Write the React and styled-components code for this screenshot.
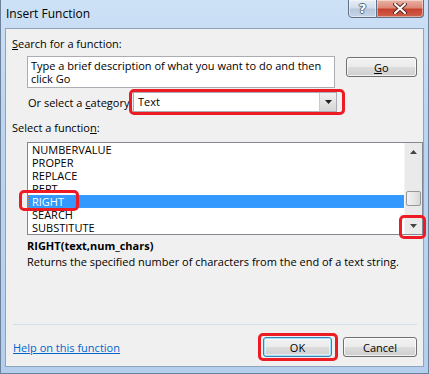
import React from "react";
import styled, { createGlobalStyle } from "styled-components";

const GlobalStyle = createGlobalStyle`
  html, body {
    margin: 0;
    padding: 0;
    background: #ffffff;
  }
  body {
    font-family: "Open Sans", "Noto Sans", sans-serif;
    font-size: 11px;
    color: #000;
  }
`;

const FONT = `"Open Sans", "Noto Sans", sans-serif`;

const Window = styled.div`
  box-sizing: border-box;
  width: 429px;
  height: 374px;
  display: flex;
  flex-direction: column;
  padding: 0 4px 6px 4px;
  border: 1px solid #6d819a;
  border-top: none;
  background: linear-gradient(180deg, #cde1f6 0%, #bcd6f1 30%, #b4cfee 100%);
`;

const TitleBar = styled.div`
  height: 28px;
  display: flex;
  align-items: flex-start;
  justify-content: space-between;
  flex: 0 0 auto;
`;

const Title = styled.div`
  font-family: ${FONT};
  font-size: 12px;
  line-height: 15px;
  padding: 6px 0 0 1px;
  color: #000;
`;

const CaptionButtons = styled.div`
  display: flex;
  margin-top: -1px;
`;

const CaptionButton = styled.div`
  box-sizing: border-box;
  width: ${(p) => p.$w}px;
  height: 19px;
  display: flex;
  align-items: center;
  justify-content: center;
  border: 1px solid #5f6f84;
  border-left: ${(p) => (p.$first ? "1px solid #5f6f84" : "none")};
  border-radius: ${(p) => (p.$first ? "0 0 0 4px" : "0 0 4px 0")};
  background: ${(p) =>
    p.$close
      ? "linear-gradient(180deg, #e9b3a6 0%, #dc8a78 45%, #c7422f 55%, #d0604c 100%)"
      : "linear-gradient(180deg, #e7eef7 0%, #d2dded 45%, #b8c8dc 55%, #c6d4e6 100%)"};
  box-shadow: inset 0 0 0 1px rgba(255, 255, 255, 0.45);
`;

const HelpGlyph = styled.span`
  font-family: "DejaVu Sans", sans-serif;
  font-weight: bold;
  font-size: 13px;
  line-height: 13px;
  color: #fff;
  text-shadow: -1px 0 #56667a, 1px 0 #56667a, 0 -1px #56667a, 0 1px #56667a;
`;

const Client = styled.div`
  position: relative;
  flex: 1 1 auto;
  display: flex;
  flex-direction: column;
  background: #f0f0f0;
  border: 1px solid #8fa3b9;
  padding: 7px 6px 9px 6px;
`;

const Label = styled.div`
  font-family: ${FONT};
  font-size: 11px;
  line-height: 15px;
  margin-top: ${(p) => p.$mt || 0}px;
  margin-left: ${(p) => p.$ml || 0}px;
  font-weight: ${(p) => (p.$bold ? 700 : 400)};
  white-space: nowrap;
`;

const Row = styled.div`
  display: flex;
  align-items: ${(p) => p.$align || "flex-start"};
  margin-top: ${(p) => p.$mt || 0}px;
  margin-left: ${(p) => p.$ml || 0}px;
`;

const SearchBox = styled.div`
  box-sizing: border-box;
  width: 311px;
  height: 32px;
  background: #fff;
  border: 1px solid #abadb3;
  padding: 2px 3px;
  font-family: ${FONT};
  font-size: 11px;
  line-height: 13px;
  white-space: nowrap;
`;

const Button = styled.div`
  box-sizing: border-box;
  width: ${(p) => p.$w}px;
  height: 20px;
  margin-left: ${(p) => p.$ml || 0}px;
  margin-top: ${(p) => p.$mt || 0}px;
  display: flex;
  align-items: center;
  justify-content: center;
  font-family: ${FONT};
  font-size: 11px;
  border: 1px solid ${(p) => (p.$default ? "#3c7fb1" : "#707070")};
  border-radius: 3px;
  background: linear-gradient(180deg, #f2f2f2 0%, #ebebeb 49%, #dddddd 50%, #cfcfcf 100%);
  box-shadow: ${(p) =>
    p.$default
      ? "inset 0 0 0 1px #9de3fb, inset 0 0 0 2px rgba(255,255,255,0.5)"
      : "inset 0 0 0 1px rgba(255,255,255,0.7)"};
`;

const U = styled.span`
  text-decoration: underline;
`;

const CategoryLabel = styled(Label)`
  flex: 0 0 105px;
`;

const Anchor = styled.div`
  position: relative;
`;

const Combo = styled.div`
  box-sizing: border-box;
  width: 204px;
  height: 20px;
  display: flex;
  background: #fff;
  border: 1px solid #abadb3;
`;

const ComboText = styled.div`
  flex: 1;
  padding-left: 4px;
  font-family: ${FONT};
  font-size: 11px;
  line-height: 18px;
`;

const ComboArrow = styled.div`
  width: 16px;
  display: flex;
  align-items: center;
  justify-content: center;
  border-left: 1px solid #c9c9c9;
  background: linear-gradient(180deg, #f2f2f2 0%, #e3e3e3 50%, #d6d6d6 100%);
`;

const Annot = styled.div`
  position: absolute;
  box-sizing: border-box;
  border: 3px solid #ed1c24;
  border-radius: 5px;
  pointer-events: none;
  z-index: 3;
`;

const ListBox = styled.div`
  position: relative;
  box-sizing: border-box;
  width: 396px;
  height: 93px;
  margin-left: 15px;
  margin-top: 7px;
  display: flex;
  background: #fff;
  border: 1px solid #828790;
`;

const Items = styled.div`
  flex: 1;
  display: flex;
  flex-direction: column;
`;

const Item = styled.div`
  height: 13px;
  line-height: 13px;
  padding-left: 4px;
  font-family: ${FONT};
  font-size: 11px;
  color: ${(p) => (p.$selected ? "#fff" : "#000")};
  background: ${(p) => (p.$selected ? "#3399ff" : "transparent")};
  outline: ${(p) => (p.$selected ? "1px dotted #c77e3a" : "none")};
  outline-offset: -1px;
`;

const ScrollBar = styled.div`
  width: 17px;
  display: flex;
  flex-direction: column;
  background: #eaeaea;
  border-left: 1px solid #f4f4f4;
`;

const ScrollArrow = styled.div`
  height: 17px;
  display: flex;
  align-items: center;
  justify-content: center;
`;

const Track = styled.div`
  flex: 1;
  display: flex;
  flex-direction: column;
  justify-content: flex-end;
  padding-bottom: 11px;
`;

const Thumb = styled.div`
  box-sizing: border-box;
  height: 15px;
  margin: 0 1px;
  border: 1px solid #979797;
  border-radius: 2px;
  background: linear-gradient(90deg, #f3f3f3 0%, #e8e8e8 50%, #d8d8d8 100%);
`;

const Separator = styled.div`
  height: 1px;
  margin-top: auto;
  margin-left: 1px;
  background: #d5dfe5;
`;

const Footer = styled.div`
  display: flex;
  align-items: center;
  margin-top: 12px;
  padding-left: 1px;
`;

const HelpLink = styled.span`
  font-family: ${FONT};
  font-size: 11px;
  color: #0066cc;
  text-decoration: underline;
  margin-right: auto;
`;

const Triangle = ({ up, color = "#222" }) => (
  <svg width="7" height="4" viewBox="0 0 7 4">
    <path d={up ? "M0 4 L3.5 0 L7 4 Z" : "M0 0 L7 0 L3.5 4 Z"} fill={color} />
  </svg>
);

const CloseIcon = () => (
  <svg width="14" height="11" viewBox="0 0 14 11">
    <path d="M2 1 L12 10 M12 1 L2 10" stroke="#5a2a24" strokeWidth="4" strokeLinecap="round" />
    <path d="M2 1 L12 10 M12 1 L2 10" stroke="#ffffff" strokeWidth="2" strokeLinecap="round" />
  </svg>
);

const functions = [
  "NUMBERVALUE",
  "PROPER",
  "REPLACE",
  "REPT",
  "RIGHT",
  "SEARCH",
  "SUBSTITUTE",
];

export default function App() {
  return (
    <>
      <GlobalStyle />
      <Window>
        <TitleBar>
          <Title>Insert Function</Title>
          <CaptionButtons>
            <CaptionButton $w={29} $first>
              <HelpGlyph>?</HelpGlyph>
            </CaptionButton>
            <CaptionButton $w={47} $close>
              <CloseIcon />
            </CaptionButton>
          </CaptionButtons>
        </TitleBar>
        <Client>
          <Label>
            <U>S</U>earch for a function:
          </Label>
          <Row $mt={5} $ml={15}>
            <SearchBox>
              Type a brief description of what you want to do and then
              <br />
              click Go
            </SearchBox>
            <Button $w={72} $ml={11} $mt={1}>
              <span>
                <U>G</U>o
              </span>
            </Button>
          </Row>
          <Row $mt={4} $ml={16} $align="center">
            <CategoryLabel>
              Or select a <U>c</U>ategory
            </CategoryLabel>
            <Anchor>
              <Combo>
                <ComboText>Text</ComboText>
                <ComboArrow>
                  <Triangle />
                </ComboArrow>
              </Combo>
              <Annot style={{ left: -4, top: -3, width: 216, height: 26 }} />
            </Anchor>
          </Row>
          <Label $mt={8}>
            Select a functio<U>n</U>:
          </Label>
          <ListBox>
            <Items>
              {functions.map((f) => (
                <Item key={f} $selected={f === "RIGHT"}>
                  {f}
                </Item>
              ))}
            </Items>
            <ScrollBar>
              <ScrollArrow>
                <Triangle up color="#444" />
              </ScrollArrow>
              <Track>
                <Thumb />
              </Track>
              <ScrollArrow>
                <Triangle color="#444" />
              </ScrollArrow>
            </ScrollBar>
            <Annot style={{ left: -9, top: 47, width: 60, height: 21 }} />
            <Annot style={{ left: 371, top: 72, width: 27, height: 24 }} />
          </ListBox>
          <Label $bold $mt={3} $ml={15}>
            RIGHT(text,num_chars)
          </Label>
          <Label $mt={1} $ml={15}>
            Returns the specified number of characters from the end of a text string.
          </Label>
          <Separator />
          <Footer>
            <HelpLink>Help on this function</HelpLink>
            <Anchor>
              <Button $w={69} $default>
                OK
              </Button>
              <Annot style={{ left: -5, top: -4, width: 80, height: 28 }} />
            </Anchor>
            <Button $w={74} $ml={11}>
              Cancel
            </Button>
          </Footer>
        </Client>
      </Window>
    </>
  );
}
